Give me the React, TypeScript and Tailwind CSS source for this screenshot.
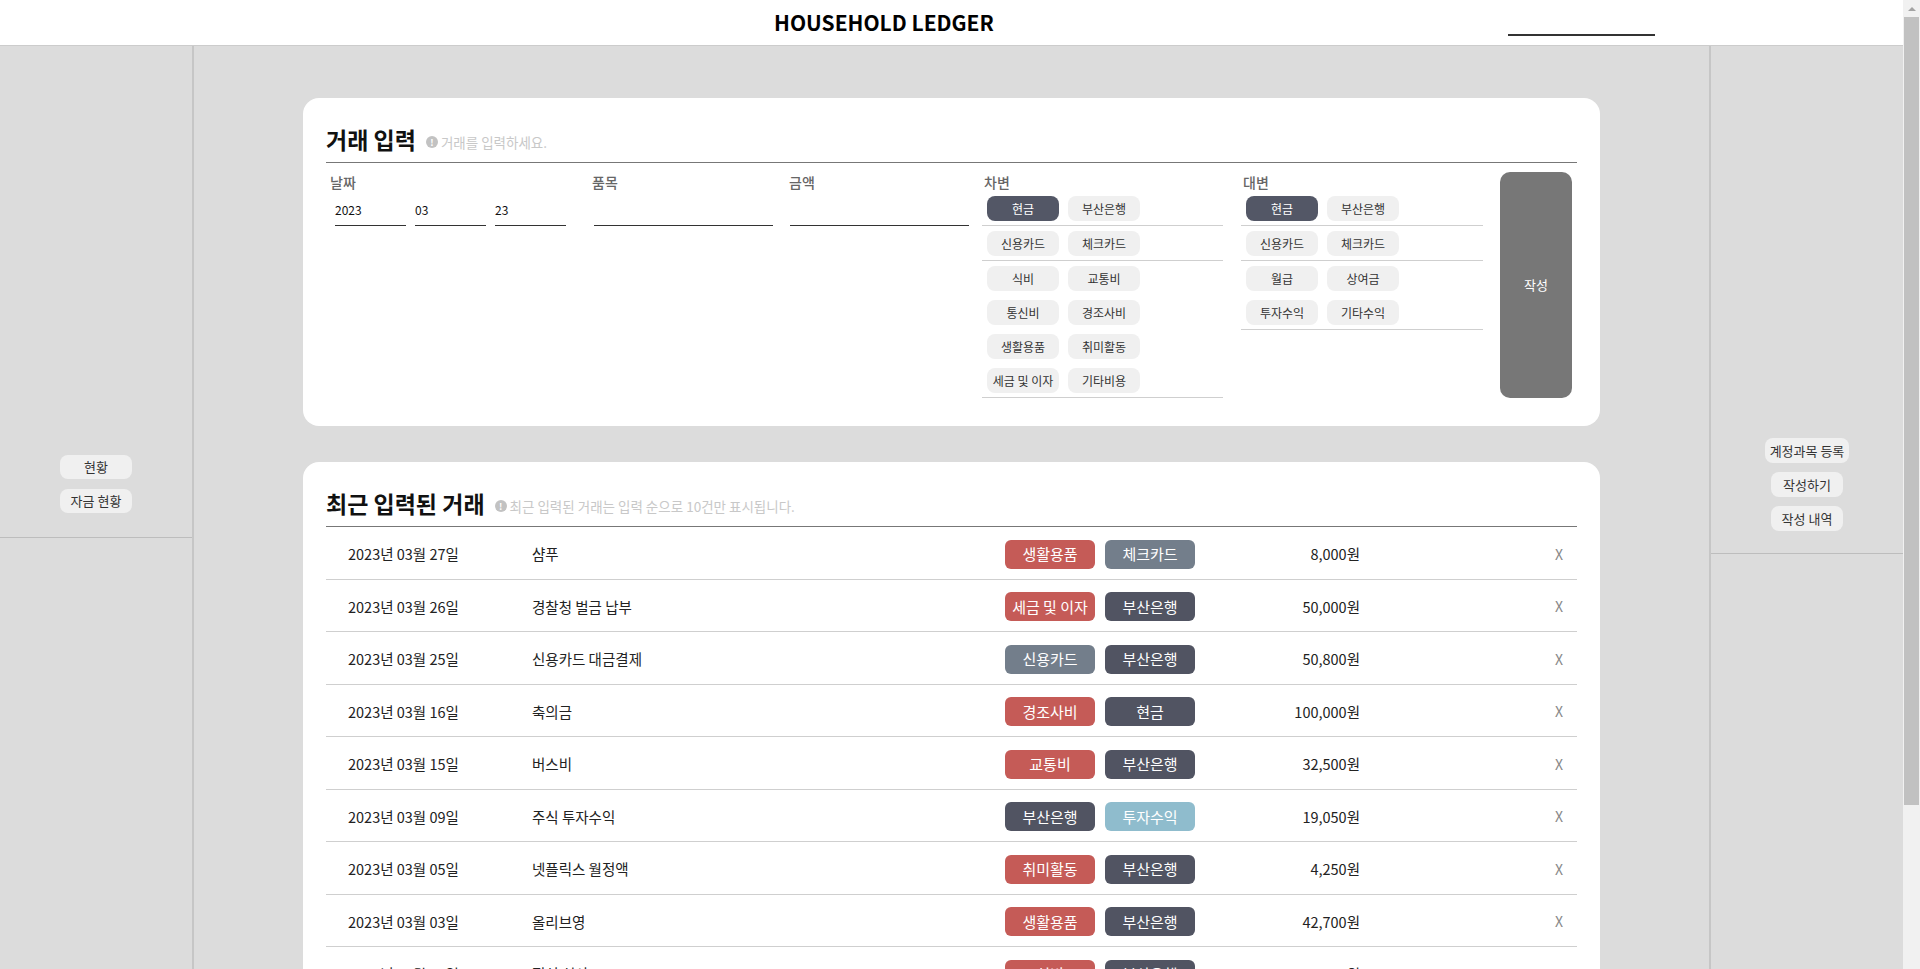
import type { ReactNode } from "react";

type Tone = "red" | "slate" | "dark" | "sky";

const TONES: Record<Tone, string> = {
  red: "bg-[#c55b57]",
  slate: "bg-[#737e8b]",
  dark: "bg-[#515462]",
  sky: "bg-[#8fbccd]",
};

type Entry = {
  date: string;
  item: string;
  debit: [string, Tone];
  credit: [string, Tone];
  amount: string;
};

const ENTRIES: Entry[] = [
  { date: "2023년 03월 27일", item: "샴푸", debit: ["생활용품", "red"], credit: ["체크카드", "slate"], amount: "8,000원" },
  { date: "2023년 03월 26일", item: "경찰청 벌금 납부", debit: ["세금 및 이자", "red"], credit: ["부산은행", "dark"], amount: "50,000원" },
  { date: "2023년 03월 25일", item: "신용카드 대금결제", debit: ["신용카드", "slate"], credit: ["부산은행", "dark"], amount: "50,800원" },
  { date: "2023년 03월 16일", item: "축의금", debit: ["경조사비", "red"], credit: ["현금", "dark"], amount: "100,000원" },
  { date: "2023년 03월 15일", item: "버스비", debit: ["교통비", "red"], credit: ["부산은행", "dark"], amount: "32,500원" },
  { date: "2023년 03월 09일", item: "주식 투자수익", debit: ["부산은행", "dark"], credit: ["투자수익", "sky"], amount: "19,050원" },
  { date: "2023년 03월 05일", item: "넷플릭스 월정액", debit: ["취미활동", "red"], credit: ["부산은행", "dark"], amount: "4,250원" },
  { date: "2023년 03월 03일", item: "올리브영", debit: ["생활용품", "red"], credit: ["부산은행", "dark"], amount: "42,700원" },
  { date: "2023년 03월 02일", item: "점심 식사", debit: ["식비", "red"], credit: ["부산은행", "dark"], amount: "9,500원" },
  { date: "2023년 03월 01일", item: "휴대폰 요금", debit: ["통신비", "red"], credit: ["부산은행", "dark"], amount: "55,000원" },
];

const DEBIT_GROUPS = [
  [["현금", "부산은행"]],
  [["신용카드", "체크카드"]],
  [
    ["식비", "교통비"],
    ["통신비", "경조사비"],
    ["생활용품", "취미활동"],
    ["세금 및 이자", "기타비용"],
  ],
];

const CREDIT_GROUPS = [
  [["현금", "부산은행"]],
  [["신용카드", "체크카드"]],
  [
    ["월급", "상여금"],
    ["투자수익", "기타수익"],
  ],
];

function SideButton({ children, tall }: { children: ReactNode; tall?: boolean }) {
  return (
    <button
      type="button"
      className={`${tall ? "leading-[25px]" : "leading-[24px]"} min-w-[72px] rounded-[8px] bg-[#f0f0f0] px-[5px] text-[13px] text-[#333]`}
    >
      {children}
    </button>
  );
}

function InfoNote({ children }: { children: ReactNode }) {
  return (
    <span className="mb-[3px] ml-[10px] flex items-center gap-[3px] text-[13.5px] leading-[18px] text-[#c8c8c8]">
      <span className="flex h-[12px] w-[12px] items-center justify-center rounded-full bg-[#c2c2c2] text-[9px] font-bold leading-none text-white">
        !
      </span>
      {children}
    </span>
  );
}

function CardTitle({ title, note }: { title: string; note: string }) {
  return (
    <div className="flex items-end border-b border-[#777] pb-[8px]">
      <h2 className="text-[23px] font-bold leading-[30px] text-[#111]">{title}</h2>
      <InfoNote>{note}</InfoNote>
    </div>
  );
}

function Chip({ label, active }: { label: string; active?: boolean }) {
  return (
    <button
      type="button"
      className={
        active
          ? "h-[25px] min-w-[72px] rounded-[8px] bg-[#535766] px-[4px] text-[12px] text-white"
          : "h-[25px] min-w-[72px] rounded-[8px] bg-[#f0f0f0] px-[4px] text-[12px] text-[#333]"
      }
    >
      {label}
    </button>
  );
}

function AccountPicker({ title, groups }: { title: string; groups: string[][][] }) {
  return (
    <div>
      <div className="pl-[2px] text-[14px] font-medium leading-[20px] text-[#666]">{title}</div>
      <div className="mt-[-1px]">
        {groups.map((rows, gi) => (
          <div key={gi} className="flex flex-col gap-[9px] border-b border-[#cfcfcf] pb-[4px] pl-[5px] pt-[5px]">
            {rows.map((row, ri) => (
              <div key={ri} className="flex gap-[9px]">
                {row.map((label, li) => (
                  <Chip key={label} label={label} active={gi === 0 && ri === 0 && li === 0} />
                ))}
              </div>
            ))}
          </div>
        ))}
      </div>
    </div>
  );
}

function FieldLabel({ children }: { children: ReactNode }) {
  return <div className="text-[14px] font-medium leading-[20px] text-[#666]">{children}</div>;
}

function LineInput({ value, width }: { value?: string; width: string }) {
  return (
    <div className={`${width} h-[26px] border-b border-[#333] text-[12px] leading-[20px] text-[#111]`}>
      {value}
    </div>
  );
}

function Badge({ label, tone }: { label: string; tone: Tone }) {
  return (
    <span
      className={`${TONES[tone]} flex h-[29px] w-[90px] items-center justify-center rounded-[6px] text-[15px] text-white`}
    >
      {label}
    </span>
  );
}

function EntryRow({ entry }: { entry: Entry }) {
  return (
    <div className="flex h-[52.5px] items-center border-b border-[#cfcfcf] pt-[3px] text-[14.5px] text-[#222]">
      <span className="w-[206px] pl-[22px]">{entry.date}</span>
      <span className="w-[473px]">{entry.item}</span>
      <div className="flex gap-[10px]">
        <Badge label={entry.debit[0]} tone={entry.debit[1]} />
        <Badge label={entry.credit[0]} tone={entry.credit[1]} />
      </div>
      <span className="w-[165px] text-right">{entry.amount}</span>
      <span className="ml-auto mr-[14px] text-[14px] text-[#888]">X</span>
    </div>
  );
}

function Scrollbar() {
  return (
    <div className="sticky top-0 flex h-screen w-[17px] shrink-0 flex-col items-center bg-[#f1f1f1]">
      <div className="flex h-[17px] w-full items-center justify-center">
        <span className="h-0 w-0 border-x-[4px] border-b-[4px] border-x-transparent border-b-[#a3a3a3]" />
      </div>
      <div className="h-[788px] w-[15px] bg-[#c1c1c1]" />
    </div>
  );
}

export default function App() {
  return (
    <div className="flex bg-[#dcdcdc] font-['Noto_Sans_CJK_KR','Noto_Sans',sans-serif]">
      <div className="min-h-screen w-[1903px] shrink-0">
        <header className="flex h-[46px] items-center border-b border-[#cccccc] bg-white">
          <h1 className="ml-[774px] text-[21px] font-bold leading-none text-black">HOUSEHOLD LEDGER</h1>
          <div className="ml-auto mr-[248px] mt-[16px] h-[10px] w-[147px] border-b-2 border-[#333]" />
        </header>

        <div className="flex">
          <aside className="w-[194px] shrink-0 border-r-2 border-[#c6c6c6]">
            <div className="flex h-[492px] flex-col items-center justify-end gap-[10px] border-b border-[#bdbdbd] pb-[24px]">
              <SideButton>현황</SideButton>
              <SideButton>자금 현황</SideButton>
            </div>
          </aside>

          <main className="flex-1 pb-[40px] pt-[52px]">
            <section className="mx-auto w-[1297px] rounded-[16px] bg-white px-[23px] pb-[28px] pt-[26px]">
              <CardTitle title="거래 입력" note="거래를 입력하세요." />
              <div className="flex pt-[9px]">
                <div className="ml-[4px] w-[262px]">
                  <FieldLabel>날짜</FieldLabel>
                  <div className="mt-[8px] flex gap-[9px] pl-[5px]">
                    <LineInput value="2023" width="w-[71px]" />
                    <LineInput value="03" width="w-[71px]" />
                    <LineInput value="23" width="w-[71px]" />
                  </div>
                </div>
                <div className="w-[197px]">
                  <FieldLabel>품목</FieldLabel>
                  <div className="mt-[8px] pl-[2px]">
                    <LineInput width="w-[179px]" />
                  </div>
                </div>
                <div className="w-[193px]">
                  <FieldLabel>금액</FieldLabel>
                  <div className="mt-[8px] pl-[1px]">
                    <LineInput width="w-[179px]" />
                  </div>
                </div>
                <div className="w-[241px]">
                  <AccountPicker title="차변" groups={DEBIT_GROUPS} />
                </div>
                <div className="ml-[18px] w-[242px]">
                  <AccountPicker title="대변" groups={CREDIT_GROUPS} />
                </div>
                <button
                  type="button"
                  className="ml-[17px] w-[72px] rounded-[10px] bg-[#777] text-[13px] text-white"
                >
                  작성
                </button>
              </div>
            </section>

            <section className="mx-auto mt-[36px] w-[1297px] rounded-[16px] bg-white px-[23px] pb-[25px] pt-[26px]">
              <CardTitle title="최근 입력된 거래" note="최근 입력된 거래는 입력 순으로 10건만 표시됩니다." />
              {ENTRIES.map((entry, i) => (
                <EntryRow key={i} entry={entry} />
              ))}
            </section>
          </main>

          <aside className="w-[194px] shrink-0 border-l-2 border-[#c6c6c6]">
            <div className="flex h-[508px] flex-col items-center justify-end gap-[9px] border-b border-[#bdbdbd] pb-[22px]">
              <SideButton tall>계정과목 등록</SideButton>
              <SideButton tall>작성하기</SideButton>
              <SideButton tall>작성 내역</SideButton>
            </div>
          </aside>
        </div>
      </div>
      <Scrollbar />
    </div>
  );
}
